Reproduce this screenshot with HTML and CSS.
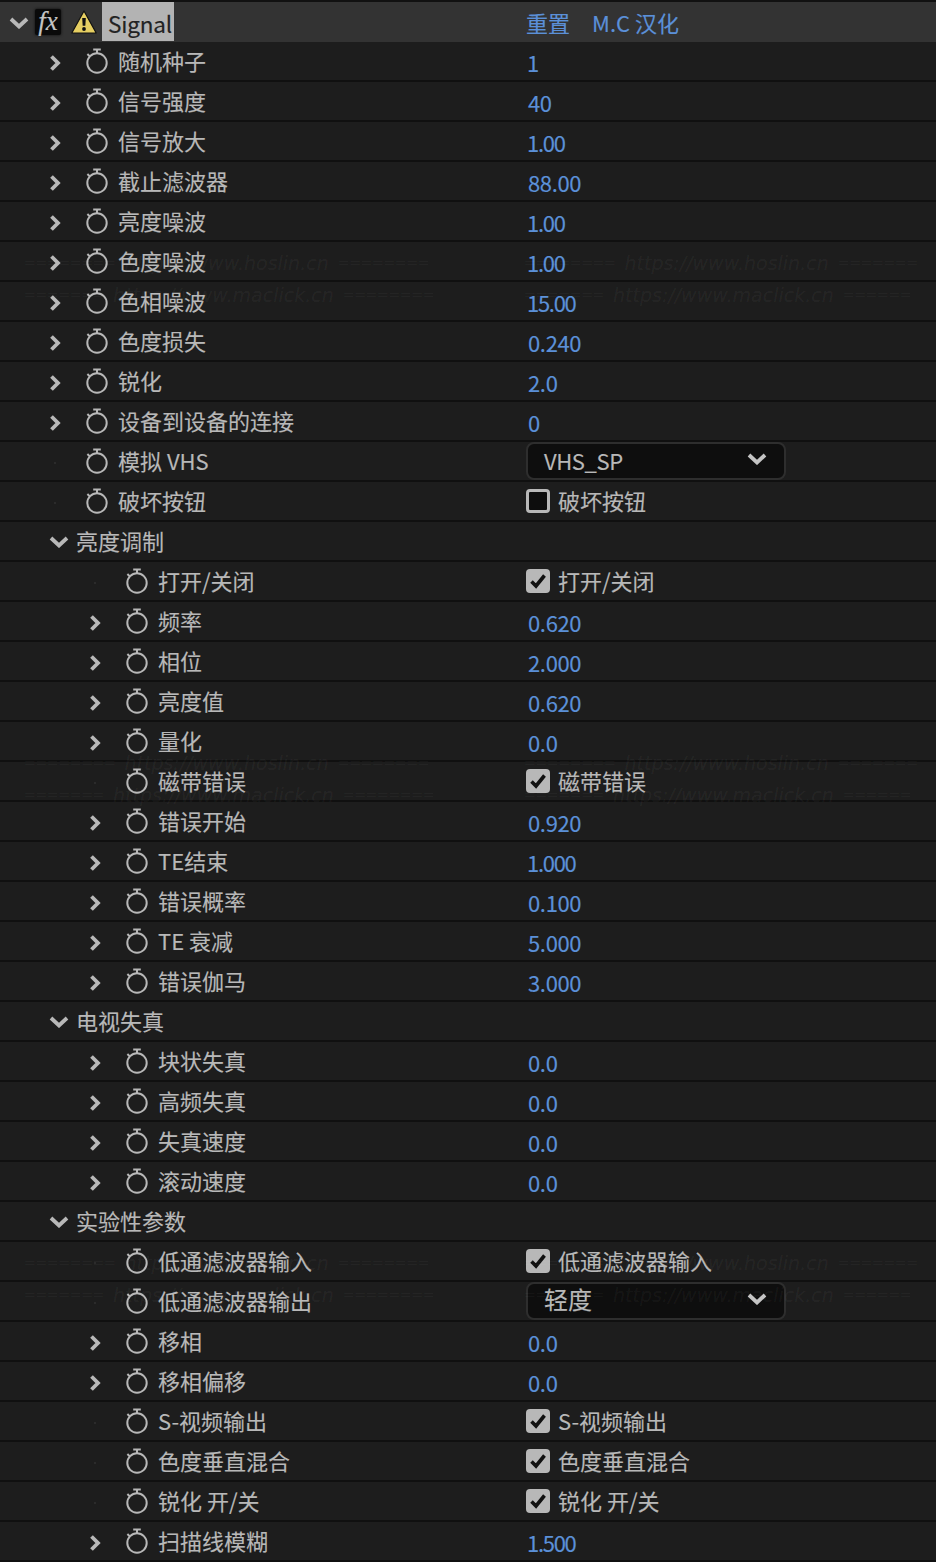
FILE: index.html
```html
<!DOCTYPE html>
<html lang="zh-CN">
<head>
<meta charset="utf-8">
<title>Signal</title>
<link rel="stylesheet" href="styles.css">
</head>
<body>
<svg class="defs" width="0" height="0" aria-hidden="true">
  <symbol id="sw" viewBox="0 0 24 28">
    <circle cx="12" cy="15" r="9.7" fill="none" stroke="currentColor" stroke-width="2"/>
    <path d="M8.2 1.6H15.8M12 1.6V5M2.4 6L5 8.6" fill="none" stroke="currentColor" stroke-width="2"/>
  </symbol>
  <symbol id="cr" viewBox="0 0 14 18">
    <path d="M3.5 2.5L10 9L3.5 15.5" fill="none" stroke="currentColor" stroke-width="3.8"/>
  </symbol>
  <symbol id="cd" viewBox="0 0 20 12">
    <path d="M2 2L10 9.5L18 2" fill="none" stroke="currentColor" stroke-width="3.8"/>
  </symbol>
  <symbol id="ck" viewBox="0 0 24 24">
    <path d="M5.5 12.5L10 17L18.5 6.5" fill="none" stroke="currentColor" stroke-width="3.6"/>
  </symbol>
</svg>
<main class="panel">
  <div class="row head">
    <div class="name lvh">
      <svg class="chev-d"><use href="#cd"/></svg>
      <span class="fx">fx</span>
      <svg class="warn" viewBox="0 0 26 24"><path d="M13 1L25.2 23H0.8Z" fill="#e6cf62" stroke="#111" stroke-width="1.2" stroke-linejoin="round"/><path d="M11.2 8H14.8L14.3 15.8H11.7Z" fill="#111"/><circle cx="13" cy="19" r="1.9" fill="#111"/></svg>
      <span class="title">Signal</span>
    </div>
    <div class="val head-links"><span>重置</span><span>M.C 汉化</span></div>
  </div>

  <div class="row"><div class="name lv1"><svg class="tw"><use href="#cr"/></svg><svg class="sw"><use href="#sw"/></svg><span>随机种子</span></div><div class="val num one">1</div></div>
  <div class="row"><div class="name lv1"><svg class="tw"><use href="#cr"/></svg><svg class="sw"><use href="#sw"/></svg><span>信号强度</span></div><div class="val num">40</div></div>
  <div class="row"><div class="name lv1"><svg class="tw"><use href="#cr"/></svg><svg class="sw"><use href="#sw"/></svg><span>信号放大</span></div><div class="val num one">1.00</div></div>
  <div class="row"><div class="name lv1"><svg class="tw"><use href="#cr"/></svg><svg class="sw"><use href="#sw"/></svg><span>截止滤波器</span></div><div class="val num">88.00</div></div>
  <div class="row"><div class="name lv1"><svg class="tw"><use href="#cr"/></svg><svg class="sw"><use href="#sw"/></svg><span>亮度噪波</span></div><div class="val num one">1.00</div></div>
  <div class="row"><div class="name lv1"><svg class="tw"><use href="#cr"/></svg><svg class="sw"><use href="#sw"/></svg><span>色度噪波</span></div><div class="val num one">1.00</div></div>
  <div class="row"><div class="name lv1"><svg class="tw"><use href="#cr"/></svg><svg class="sw"><use href="#sw"/></svg><span>色相噪波</span></div><div class="val num one">15.00</div></div>
  <div class="row"><div class="name lv1"><svg class="tw"><use href="#cr"/></svg><svg class="sw"><use href="#sw"/></svg><span>色度损失</span></div><div class="val num">0.240</div></div>
  <div class="row"><div class="name lv1"><svg class="tw"><use href="#cr"/></svg><svg class="sw"><use href="#sw"/></svg><span>锐化</span></div><div class="val num">2.0</div></div>
  <div class="row"><div class="name lv1"><svg class="tw"><use href="#cr"/></svg><svg class="sw"><use href="#sw"/></svg><span>设备到设备的连接</span></div><div class="val num">0</div></div>
  <div class="row"><div class="name lv1"><i class="tw dot"></i><svg class="sw"><use href="#sw"/></svg><span>模拟 VHS</span></div><div class="val"><div class="select"><span class="sel-text">VHS_SP</span><svg class="sel-chev"><use href="#cd"/></svg></div></div></div>
  <div class="row"><div class="name lv1"><i class="tw dot"></i><svg class="sw"><use href="#sw"/></svg><span>破坏按钮</span></div><div class="val opt"><i class="box"></i><span>破坏按钮</span></div></div>

  <div class="row"><div class="name grp"><svg class="chev-g"><use href="#cd"/></svg><span>亮度调制</span></div><div class="val"></div></div>
  <div class="row"><div class="name lv2"><i class="tw dot"></i><svg class="sw"><use href="#sw"/></svg><span>打开/关闭</span></div><div class="val opt"><svg class="box on"><use href="#ck"/></svg><span>打开/关闭</span></div></div>
  <div class="row"><div class="name lv2"><svg class="tw"><use href="#cr"/></svg><svg class="sw"><use href="#sw"/></svg><span>频率</span></div><div class="val num">0.620</div></div>
  <div class="row"><div class="name lv2"><svg class="tw"><use href="#cr"/></svg><svg class="sw"><use href="#sw"/></svg><span>相位</span></div><div class="val num">2.000</div></div>
  <div class="row"><div class="name lv2"><svg class="tw"><use href="#cr"/></svg><svg class="sw"><use href="#sw"/></svg><span>亮度值</span></div><div class="val num">0.620</div></div>
  <div class="row"><div class="name lv2"><svg class="tw"><use href="#cr"/></svg><svg class="sw"><use href="#sw"/></svg><span>量化</span></div><div class="val num">0.0</div></div>
  <div class="row"><div class="name lv2"><i class="tw dot"></i><svg class="sw"><use href="#sw"/></svg><span>磁带错误</span></div><div class="val opt"><svg class="box on"><use href="#ck"/></svg><span>磁带错误</span></div></div>
  <div class="row"><div class="name lv2"><svg class="tw"><use href="#cr"/></svg><svg class="sw"><use href="#sw"/></svg><span>错误开始</span></div><div class="val num">0.920</div></div>
  <div class="row"><div class="name lv2"><svg class="tw"><use href="#cr"/></svg><svg class="sw"><use href="#sw"/></svg><span>TE结束</span></div><div class="val num one">1.000</div></div>
  <div class="row"><div class="name lv2"><svg class="tw"><use href="#cr"/></svg><svg class="sw"><use href="#sw"/></svg><span>错误概率</span></div><div class="val num">0.100</div></div>
  <div class="row"><div class="name lv2"><svg class="tw"><use href="#cr"/></svg><svg class="sw"><use href="#sw"/></svg><span>TE 衰减</span></div><div class="val num">5.000</div></div>
  <div class="row"><div class="name lv2"><svg class="tw"><use href="#cr"/></svg><svg class="sw"><use href="#sw"/></svg><span>错误伽马</span></div><div class="val num">3.000</div></div>

  <div class="row"><div class="name grp"><svg class="chev-g"><use href="#cd"/></svg><span>电视失真</span></div><div class="val"></div></div>
  <div class="row"><div class="name lv2"><svg class="tw"><use href="#cr"/></svg><svg class="sw"><use href="#sw"/></svg><span>块状失真</span></div><div class="val num">0.0</div></div>
  <div class="row"><div class="name lv2"><svg class="tw"><use href="#cr"/></svg><svg class="sw"><use href="#sw"/></svg><span>高频失真</span></div><div class="val num">0.0</div></div>
  <div class="row"><div class="name lv2"><svg class="tw"><use href="#cr"/></svg><svg class="sw"><use href="#sw"/></svg><span>失真速度</span></div><div class="val num">0.0</div></div>
  <div class="row"><div class="name lv2"><svg class="tw"><use href="#cr"/></svg><svg class="sw"><use href="#sw"/></svg><span>滚动速度</span></div><div class="val num">0.0</div></div>

  <div class="row"><div class="name grp"><svg class="chev-g"><use href="#cd"/></svg><span>实验性参数</span></div><div class="val"></div></div>
  <div class="row"><div class="name lv2"><i class="tw dot"></i><svg class="sw"><use href="#sw"/></svg><span>低通滤波器输入</span></div><div class="val opt"><svg class="box on"><use href="#ck"/></svg><span>低通滤波器输入</span></div></div>
  <div class="row"><div class="name lv2"><i class="tw dot"></i><svg class="sw"><use href="#sw"/></svg><span>低通滤波器输出</span></div><div class="val"><div class="select"><span class="sel-text big">轻度</span><svg class="sel-chev"><use href="#cd"/></svg></div></div></div>
  <div class="row"><div class="name lv2"><svg class="tw"><use href="#cr"/></svg><svg class="sw"><use href="#sw"/></svg><span>移相</span></div><div class="val num">0.0</div></div>
  <div class="row"><div class="name lv2"><svg class="tw"><use href="#cr"/></svg><svg class="sw"><use href="#sw"/></svg><span>移相偏移</span></div><div class="val num">0.0</div></div>
  <div class="row"><div class="name lv2"><i class="tw dot"></i><svg class="sw"><use href="#sw"/></svg><span>S-视频输出</span></div><div class="val opt"><svg class="box on"><use href="#ck"/></svg><span>S-视频输出</span></div></div>
  <div class="row"><div class="name lv2"><i class="tw dot"></i><svg class="sw"><use href="#sw"/></svg><span>色度垂直混合</span></div><div class="val opt"><svg class="box on"><use href="#ck"/></svg><span>色度垂直混合</span></div></div>
  <div class="row"><div class="name lv2"><i class="tw dot"></i><svg class="sw"><use href="#sw"/></svg><span>锐化 开/关</span></div><div class="val opt"><svg class="box on"><use href="#ck"/></svg><span>锐化 开/关</span></div></div>
  <div class="row"><div class="name lv2"><svg class="tw"><use href="#cr"/></svg><svg class="sw"><use href="#sw"/></svg><span>扫描线模糊</span></div><div class="val num one">1.500</div></div>

  <div class="wm-set s1">
    <div class="wm a"><b>========</b><span>https://www.hoslin.cn</span><b>========</b></div>
    <div class="wm b"><b>========</b><span>https://www.hoslin.cn</span><b>=======</b></div>
    <div class="wm c"><b>=======</b><span>https://www.maclick.cn</span><b>========</b></div>
    <div class="wm d"><b>=======</b><span>https://www.maclick.cn</span><b>======</b></div>
  </div>
  <div class="wm-set s2">
    <div class="wm a"><b>========</b><span>https://www.hoslin.cn</span><b>========</b></div>
    <div class="wm b"><b>========</b><span>https://www.hoslin.cn</span><b>=======</b></div>
    <div class="wm c"><b>=======</b><span>https://www.maclick.cn</span><b>========</b></div>
    <div class="wm d"><b>=======</b><span>https://www.maclick.cn</span><b>======</b></div>
  </div>
  <div class="wm-set s3">
    <div class="wm a"><b>========</b><span>https://www.hoslin.cn</span><b>========</b></div>
    <div class="wm b"><b>========</b><span>https://www.hoslin.cn</span><b>=======</b></div>
    <div class="wm c"><b>=======</b><span>https://www.maclick.cn</span><b>========</b></div>
    <div class="wm d"><b>=======</b><span>https://www.maclick.cn</span><b>======</b></div>
  </div>
</main>
</body>
</html>
```
FILE: styles.css
```css
* { box-sizing: border-box; }
html, body { margin: 0; padding: 0; background: #1d1d1d; }
.defs { position: absolute; }
.panel {
  position: relative;
  width: 936px;
  height: 1562px;
  overflow: hidden;
  background: #1d1d1d;
  font-family: "Noto Sans CJK SC", "Noto Sans", sans-serif;
  font-size: 22px;
  color: #b8b8b8;
  -webkit-text-stroke: 0.15px currentColor;
}
.row {
  display: grid;
  grid-template-columns: 527px 1fr;
  grid-template-rows: 38px;
  height: 40px;
  border-bottom: 2px solid #101010;
  line-height: 37px;
}
.head {
  background: #333333;
  border-top: 2px solid #111111;
  border-bottom: 0;
  height: 42px;
  grid-template-rows: 40px;
  line-height: 39px;
}
.name { display: flex; align-items: center; min-width: 0; white-space: pre; height: 37px; }
.head .name, .head .val { height: 39px; }
.lv1 { padding-left: 48px; }
.lv2 { padding-left: 88px; }
.grp { padding-left: 49px; }
.lvh { padding-left: 9px; }
.tw { width: 14px; height: 18px; flex: none; margin-right: 23px; margin-top: 5px; }
.dot { display: flex; align-items: center; justify-content: center; }
.dot::before { content: ""; width: 2px; height: 2px; background: #2b2b2b; }
.sw { width: 24px; height: 28px; flex: none; margin-right: 9px; margin-top: 3px; }
.chev-g { width: 20px; height: 12px; flex: none; margin-right: 7px; margin-top: 2px; }
.chev-d { width: 20px; height: 12px; flex: none; margin-top: 2px; }
.fx {
  width: 26px;
  height: 26px;
  margin-left: 6px;
  background: #0a0a0a;
  border-radius: 2px;
  box-shadow: 0 0 3px #0a0a0a;
  color: #c4c4c4;
  font-family: "Liberation Serif", serif;
  font-style: italic;
  font-size: 27px;
  line-height: 24px;
  text-align: center;
}
.warn { width: 26px; height: 24px; margin-left: 10px; flex: none; }
.title {
  margin-left: 5px;
  width: 72px;
  height: 39px;
  padding-left: 6px;
  background: #b3b3b3;
  color: #222222;
  line-height: 42px;
  font-size: 22.5px;
  letter-spacing: -0.2px;
}
.val { color: #b8b8b8; display: flex; align-items: center; height: 37px; white-space: pre; }
.num { color: #5b90d8; padding-top: 3px; letter-spacing: -0.35px; padding-left: 1px; }
.one { letter-spacing: -1.3px; padding-left: 0; }
.head-links { color: #5b90d8; gap: 22px; padding-top: 2px; margin-left: -1px; }
.select {
  flex: none;
  width: 260px;
  height: 38px;
  margin-left: -1px;
  padding: 0 17px;
  display: flex;
  align-items: center;
  justify-content: space-between;
  background: #0e0e0e;
  border: 2px solid #2e2e2e;
  border-radius: 8px;
}
.sel-text { line-height: 32px; height: 34px; margin-left: -1px; letter-spacing: -0.4px; }
.big { font-size: 24px; line-height: 30px; letter-spacing: 0; }
.sel-chev { width: 20px; height: 12px; margin-top: -3px; color: #c4c4c4; }
.opt { gap: 8px; }
.box {
  display: block;
  width: 24px;
  height: 24px;
  margin-left: -1px;
  margin-top: 1px;
  flex: none;
  border-radius: 4px;
  background: #0d0d0d;
  border: 3px solid #b8b8b8;
}
.box.on { background: #b8b8b8; border: 0; color: #111111; }

.wm-set { position: absolute; left: 0; width: 936px; height: 60px; pointer-events: none; }
.s1 { top: 250px; }
.s2 { top: 750px; }
.s3 { top: 1250px; }
.wm {
  position: absolute;
  display: flex;
  gap: 9px;
  white-space: pre;
  color: rgba(255, 255, 255, 0.05);
  font-family: "DejaVu Sans", sans-serif;
  font-style: italic;
  font-size: 19px;
  line-height: 26px;
  -webkit-text-stroke: 0;
}
.wm b { font-style: normal; font-weight: 400; font-size: 14px; letter-spacing: -0.3px; }
.a { left: 24px; top: 0; }
.b { left: 524px; top: 0; }
.c { left: 24px; top: 32px; }
.d { left: 524px; top: 32px; }
```
